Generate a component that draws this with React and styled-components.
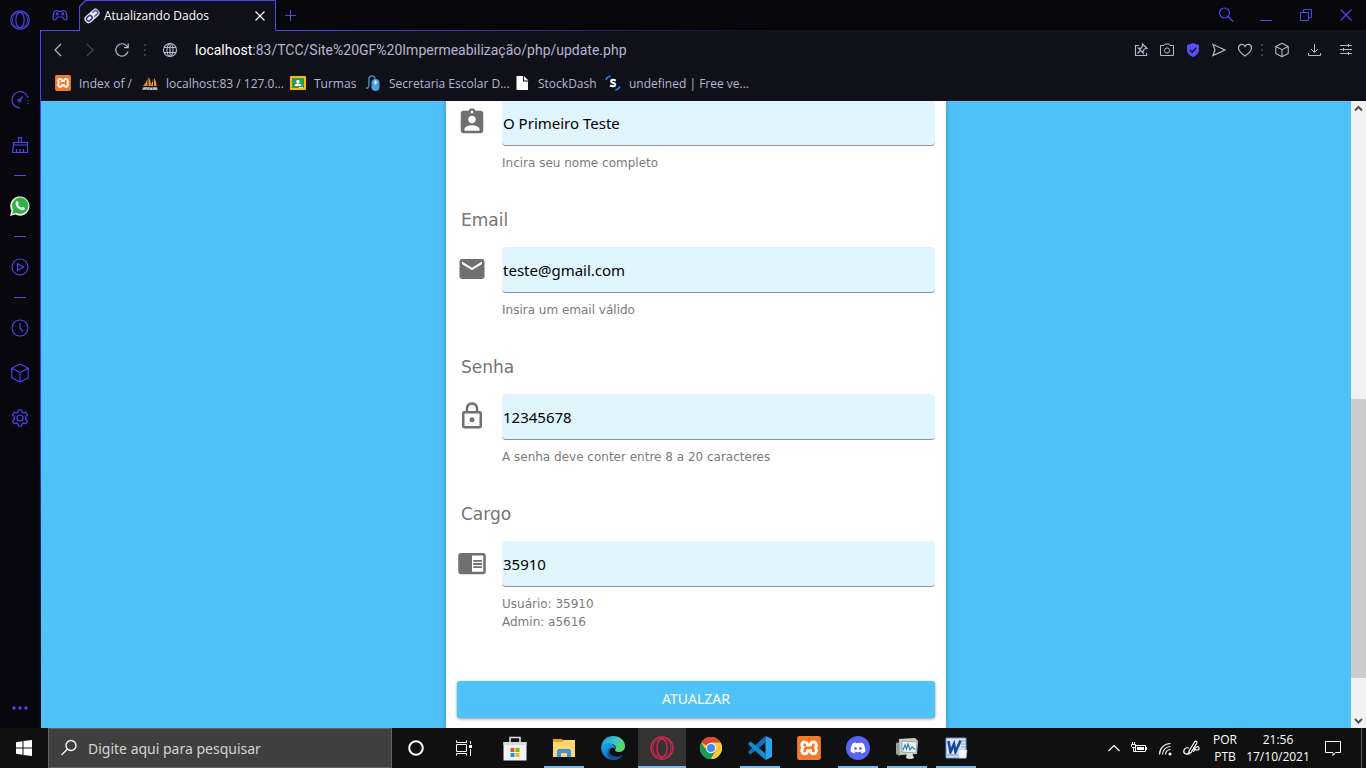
import React from "react";
import styled, { createGlobalStyle, css } from "styled-components";
import { MdAssignmentInd, MdEmail, MdLockOutline, MdChromeReaderMode } from "react-icons/md";
import { FaDiscord } from "react-icons/fa";
import { SiXampp } from "react-icons/si";

const accent = "#4b48ee";
const sky = "#4fc3f9";
const ui = `"Open Sans", "Noto Sans", sans-serif`;
const verdana = `"DejaVu Sans", sans-serif`;

const GlobalStyle = createGlobalStyle`
  *, *::before, *::after { box-sizing: border-box; }
  body { margin: 0; font-family: ${ui}; }
  button { border: 0; padding: 0; background: none; font: inherit; color: inherit; }
  svg { display: block; flex: none; }
`;

const Desktop = styled.div`
  display: flex;
  flex-direction: column;
  height: 100vh;
  overflow: hidden;
`;

const Browser = styled.div`
  display: flex;
  flex: 1;
  min-height: 0;
  background: #101018;
`;

/* ---------- side bar ---------- */
const Sidebar = styled.nav`
  display: flex;
  flex-direction: column;
  width: 41px;
  padding-right: 2px;
  color: ${accent};
  background: linear-gradient(${accent}, #3a3ac0 55%, #07070d 92%) right 30px / 1px 100% no-repeat, #07070d;
`;

const SideButton = styled.button`
  display: flex;
  align-items: center;
  justify-content: center;
  height: ${(p) => (p.$edge ? 40 : 45)}px;
`;

const SideGroup = styled.div`
  display: flex;
  flex-direction: column;
  flex: 1;
  padding-top: 37px;
`;

const SideRule = styled.hr`
  width: 12px;
  height: 1px;
  margin: 8px auto 7px;
  border: 0;
  background: ${accent};
`;

/* ---------- window chrome ---------- */
const Window = styled.div`
  display: flex;
  flex-direction: column;
  flex: 1;
  min-width: 0;
`;

const TabStrip = styled.header`
  display: flex;
  height: 31px;
  color: ${accent};
  background: linear-gradient(to right, ${accent} 20%, #101018 56%) bottom / 100% 1px no-repeat, #07070b;
`;

const CornerButton = styled.button`
  display: flex;
  align-items: center;
  justify-content: center;
  width: 38px;
  height: 30px;
`;

const Tab = styled.div`
  position: relative;
  z-index: 0;
  display: flex;
  align-items: center;
  width: 197px;
  padding: 0 9px 0 5px;
  gap: 4px;
  color: #fff;
  font-size: 12px;
  background: ${accent};
  clip-path: polygon(6px 0, 100% 0, 100% 100%, 0 100%, 0 6px);
  &::before {
    content: "";
    position: absolute;
    z-index: -1;
    inset: 1px 1px 0;
    background: #101018;
    clip-path: polygon(6px 0, 100% 0, 100% 100%, 0 100%, 0 6px);
  }
`;

const TabTitle = styled.span`
  flex: 1;
  white-space: nowrap;
`;

const NewTab = styled(CornerButton)`
  width: 28px;
`;

const WindowControls = styled.div`
  display: flex;
  margin-left: auto;
`;

const WindowButton = styled(CornerButton)`
  width: 40px;
`;

const AddressRow = styled.div`
  display: flex;
  align-items: center;
  height: 38px;
  padding: 0 4px 0 1px;
  color: #b6b4d2;
`;

const ToolButton = styled.button`
  display: flex;
  align-items: center;
  justify-content: center;
  width: ${(p) => p.$w || 32}px;
  height: 32px;
  color: ${(p) => (p.$dim ? "#44445a" : "inherit")};
`;

const DotRule = styled.span`
  width: ${(p) => p.$w}px;
  height: 12px;
  background: repeating-linear-gradient(#3c3c48 0 2px, transparent 2px 5px) center / 2px 12px no-repeat;
`;

const Address = styled.div`
  flex: 1;
  padding-left: 7px;
  font: 14px Roboto, sans-serif;
  white-space: nowrap;
  b { font-weight: 400; color: #fff; }
`;

const Bookmarks = styled.nav`
  display: flex;
  height: 32px;
  padding: 0 14px 4px;
`;

const Bookmark = styled.a`
  display: flex;
  align-items: center;
  gap: 8px;
  width: ${(p) => p.$w}px;
  color: #b9b7d6;
  font-size: 12px;
  text-decoration: none;
  white-space: nowrap;
`;

/* ---------- page ---------- */
const Viewport = styled.div`
  display: flex;
  flex: 1;
  min-height: 0;
`;

const Page = styled.main`
  display: flex;
  flex-direction: column;
  justify-content: flex-end;
  align-items: center;
  flex: 1;
  overflow: hidden;
  background: ${sky};
`;

const Card = styled.form`
  flex: none;
  width: 100%;
  max-width: 500px;
  min-height: 100%;
  padding: 0 11px 10px;
  background: #fff;
  box-shadow: 0 2px 5px rgba(0, 0, 0, 0.3);
`;

const Field = styled.div`
  margin-bottom: ${(p) => (p.$last ? 50 : 35)}px;
`;

const FieldLabel = styled.label`
  display: block;
  padding-left: 4px;
  margin-bottom: 14px;
  color: #757575;
  font: 17px/26px ${verdana};
`;

const FieldRow = styled.div`
  display: flex;
  align-items: center;
  gap: 15px;
  color: #707070;
  svg { margin-bottom: 2px; }
`;

const TextInput = styled.input`
  flex: 1;
  min-width: 0;
  height: 46px;
  padding: 0 1px;
  border: 0;
  border-bottom: 1px solid #8d9498;
  border-radius: 4px;
  outline: 0;
  background: #e1f5fe;
  color: #000;
  font: 15px "Noto Sans", sans-serif;
`;

const Hint = styled.p`
  margin: 8px 0 0 45px;
  color: #7b7b7b;
  font: 12px/18px ${verdana};
`;

const Submit = styled.button`
  display: block;
  width: 100%;
  height: 37px;
  padding-bottom: 2px;
  border-radius: 3px;
  background: ${sky};
  box-shadow: 0 1px 3px rgba(0, 0, 0, 0.45);
  color: #fff;
  font: 14px "Noto Sans", sans-serif;
`;

const Scrollbar = styled.div`
  display: flex;
  flex-direction: column;
  width: 15px;
  background: #f1f1f1;
  color: #505050;
`;

const ScrollArrow = styled.button`
  display: flex;
  align-items: center;
  justify-content: center;
  height: 15px;
`;

const ScrollPart = styled.div`
  flex: ${(p) => p.$share};
  background: ${(p) => (p.$thumb ? "#cdcdcd" : "transparent")};
`;

/* ---------- task bar ---------- */
const Taskbar = styled.footer`
  display: flex;
  flex: none;
  height: 40px;
  background: #101010;
  color: #fff;
`;

const TaskButton = styled.button`
  display: flex;
  align-items: center;
  justify-content: center;
  width: 48px;
  height: 40px;
  ${(p) => p.$running && css`
    background: linear-gradient(#76b9ed, #76b9ed) bottom / ${p.$active ? 48 : 40}px 2px no-repeat
      ${p.$active ? ", #333" : ""};
  `}
`;

const SearchBox = styled.label`
  display: flex;
  align-items: center;
  gap: 10px;
  width: 344px;
  padding-left: 11px;
  border: 1px solid #636363;
  background: #3f3f3f;
  input {
    flex: 1;
    min-width: 0;
    padding: 0;
    border: 0;
    outline: 0;
    background: none;
    font: 14px "Noto Sans", sans-serif;
  }
  input::placeholder { color: #d4d4d4; opacity: 1; }
`;

const Apps = styled.div`
  display: flex;
  gap: 1px;
  margin-left: 3px;
`;

const Tray = styled.div`
  display: flex;
  margin-left: auto;
`;

const TrayButton = styled.button`
  display: flex;
  flex-direction: column;
  align-items: center;
  justify-content: center;
  width: ${(p) => p.$w || 26}px;
  font-size: 12px;
  line-height: 17px;
  padding-bottom: 1px;
  white-space: nowrap;
`;

const ShowDesktop = styled.button`
  width: 5px;
  margin-left: 5px;
  border-left: 1px solid #5a5a5a;
`;

/* ---------- drawings ---------- */
const Line = ({ s = 24, w = 1, children }) => (
  <svg width={s} height={s} viewBox={`0 0 ${s} ${s}`} fill="none" stroke="currentColor" strokeWidth={w} aria-hidden="true">
    {children}
  </svg>
);

const OperaIcon = ({ s = 24, w = 1.4 }) => (
  <svg width={s} height={s} viewBox="0 0 24 24" fill="none" stroke="currentColor" strokeWidth={w} aria-hidden="true">
    <circle cx="12" cy="12" r="11" />
    <circle cx="12" cy="12" r="9.2" strokeWidth=".9" />
    <ellipse cx="12" cy="12" rx="5" ry="9.2" />
  </svg>
);

const CubeIcon = ({ s = 24 }) => (
  <svg width={s} height={s} viewBox="0 0 24 24" fill="none" stroke="currentColor" strokeWidth={26 / s} strokeLinejoin="round" aria-hidden="true">
    <path d="M12 3l8.3 4.2v9.6L12 21l-8.3-4.2V7.200zM3.700 7.200L12 11.500l8.300-4.300M12 11.500V21" />
  </svg>
);

const Xampp = ({ s }) => (
  <svg width={s} height={s} viewBox="0 0 24 24" aria-hidden="true">
    <rect x="2" y="2" width="20" height="20" fill="#fff" />
    <SiXampp x="0" y="0" size={24} color="#f47a2a" />
  </svg>
);

const sideIcons = {
  gauge: <Line w={1.2}><path d="M12 20A8.200 8.200 0 1 1 20 9.500M11 12.500l4-4M20 12v1M20 15v1" /><circle cx="11.500" cy="12.500" r="1.500" /></Line>,
  broom: <Line w={1.2}><path d="M10.500 9.500v-5h3v5M5.500 9.500h14v2.500h-14zM5.500 12L4.500 19.500h15V12M8.500 19.500V16M12 19.500V16M15.500 19.500V16" /></Line>,
  play: <Line w={1.2}><circle cx="12" cy="12" r="8" /><path d="M9.500 8.800v6.400l6-3.200z" /></Line>,
  clock: <Line w={1.2}><circle cx="12" cy="12" r="8" /><path d="M12 7v5l3 3.500" /></Line>,
  gear: (
    <Line w={1.2}>
      <circle cx="12" cy="12" r="3" />
      <path d="M10.400 4h3.200l.5 2.300 1.500.8 2.300-.8 1.600 2.700-1.800 1.600v2.800l1.800 1.600-1.600 2.700-2.300-.8-1.500.8-.5 2.300h-3.200l-.5-2.300-1.500-.8-2.300.8L4.500 15l1.800-1.600v-2.800L4.500 9l1.600-2.700 2.300.8 1.500-.8z" />
    </Line>
  ),
};

const WhatsApp = () => (
  <svg width="22" height="22" viewBox="0 0 22 22" aria-hidden="true">
    <path d="M1 21l1.500-5.200A9.600 9.600 0 1 1 6.300 19.500z" fill="#f2f2f2" />
    <circle cx="11.200" cy="10.700" r="8.200" fill="#2fb146" />
    <path d="M3.200 18.900l1.200-4.200 3 3z" fill="#2fb146" />
    <path d="M7.300 6.600c.7-1 1.500-.7 1.800.1l.6 1.500c.1.600-.8 1.100-.6 1.500.7 1.300 1.600 2.200 3 2.900.6.200 1-.9 1.500-.8l1.800.9c.8.400.2 1.600-.3 2-1.300.9-2.900.4-4.400-.3a9.500 9.500 0 0 1-3.800-4.400c-.4-1.200-.3-2.500.4-3.400z" fill="#fff" />
  </svg>
);

const Favicon = () => (
  <svg width="16" height="16" viewBox="0 0 16 16" aria-hidden="true">
    <g transform="rotate(-42 8 8)">
      <rect x="-.5" y="4" width="17" height="8" rx="3.500" fill="#e8e8f2" />
      <rect x="1.500" y="5.800" width="6" height="4.200" rx="2" fill="none" stroke="#353b86" strokeWidth="1.500" />
      <path d="M9 10h4a2 2 0 0 0 0-4.200h-2.500" fill="none" stroke="#5b638f" strokeWidth="1.500" />
    </g>
  </svg>
);

const bookmarkIcons = {
  sails: (
    <svg width="16" height="16" viewBox="0 0 16 16" aria-hidden="true">
      <path d="M5.500 1Q6 6 1 11h4.500zM6.500 2q3 4 2 9h-2zM11 0q.5 6-2.500 11H11zM12 3q3 4 2.500 8H12z" fill="#f0962c" />
      <path d="M0 15l1-3h14l1 3z" fill="#77778a" />
      <path d="M2 15v-2h2v1M6 12v3M8 15l1-2 1 2M12 15v-2h2v2" stroke="#dcdce8" fill="none" />
    </svg>
  ),
  classroom: (
    <svg width="16" height="16" viewBox="0 0 16 16" aria-hidden="true">
      <rect y="1" width="16" height="14" rx="1" fill="#f7bb12" />
      <rect x="2" y="3" width="12" height="10" fill="#2c9b58" />
      <circle cx="8" cy="6.500" r="1.700" fill="#fff" />
      <path d="M4.500 11q0-2.500 3.500-2.500t3.500 2.500z" fill="#fff" />
      <path d="M9 12h4v1H9z" fill="#e6e6e6" />
    </svg>
  ),
  mouse: (
    <svg width="16" height="16" viewBox="0 0 16 16" aria-hidden="true">
      <path d="M1 13q3 1 3-4V4Q4 1 7 1q3 0 3 3" fill="none" stroke="#3a86bd" strokeWidth="1.500" />
      <rect x="6.500" y="4" width="8" height="12" rx="4" fill="#4da3dc" />
      <rect x="9.500" y="5.500" width="2" height="4" rx="1" fill="#fff" />
    </svg>
  ),
  file: (
    <svg width="16" height="16" viewBox="0 0 16 16" aria-hidden="true">
      <path d="M2.500 1H9v5.500h5V15h-11.500zM10 1l4.500 4.500H10z" fill="#fff" />
    </svg>
  ),
  swirl: (
    <svg width="16" height="16" viewBox="0 0 17 17" aria-hidden="true">
      <path d="M1 5q1-3 5-4M16 12q-1 3-5 4" fill="none" stroke="#1f7cf0" strokeWidth="1.700" />
      <path d="M11.500 6Q8.500 4.400 6.700 5.700 6 7.800 8.700 8.400q2.700.6 2 2.700Q9 12.700 5.300 11.200" fill="none" stroke="#fff" strokeWidth="2.200" />
    </svg>
  ),
};

const bookmarks = [
  { icon: <Xampp s={16} />, text: "Index of /", w: 87 },
  { icon: bookmarkIcons.sails, text: "localhost:83 / 127.0...", w: 148 },
  { icon: bookmarkIcons.classroom, text: "Turmas", w: 75 },
  { icon: bookmarkIcons.mouse, text: "Secretaria Escolar D...", w: 149 },
  { icon: bookmarkIcons.file, text: "StockDash", w: 91 },
  { icon: bookmarkIcons.swirl, text: "undefined | Free ve...", w: 150 },
];

const fields = [
  { id: "nome", Icon: MdAssignmentInd, value: "O Primeiro Teste", hint: ["Incira seu nome completo"] },
  { id: "email", label: "Email", Icon: MdEmail, value: "teste@gmail.com", hint: ["Insira um email válido"] },
  { id: "senha", label: "Senha", Icon: MdLockOutline, value: "12345678", hint: ["A senha deve conter entre 8 a 20 caracteres"] },
  { id: "cargo", label: "Cargo", Icon: MdChromeReaderMode, value: "35910", hint: ["Usuário: 35910", "Admin: a5616"], last: true },
];

const Store = () => (
  <svg width="24" height="26" viewBox="0 0 24 26" aria-hidden="true">
    <path d="M7 8V2.500h10V8" fill="none" stroke="#dedede" strokeWidth="1.600" />
    <path d="M.5 7h23v18.500H.5z" fill="#f2f2f2" />
    <path d="M.5 7h23v3H.5z" fill="#d9d9d9" />
    <path d="M7.500 13h4v4h-4z" fill="#f25022" /><path d="M12.500 13h4v4h-4z" fill="#7fba00" />
    <path d="M7.500 18h4v4h-4z" fill="#00a4ef" /><path d="M12.500 18h4v4h-4z" fill="#ffb900" />
  </svg>
);

const Explorer = () => (
  <svg width="22" height="20" viewBox="0 0 22 20" aria-hidden="true">
    <path d="M0 1h9l2 2h11v16H0z" fill="#e8a317" />
    <path d="M0 4h9l2-2h11v17H0z" fill="#ffd76a" />
    <path d="M4 19v-6q0-2 2-2h10q2 0 2 2v6h-4v-4H8v4z" fill="#3b93d8" />
  </svg>
);

const Edge = () => (
  <svg width="24" height="24" viewBox="0 0 24 24" aria-hidden="true">
    <defs>
      <linearGradient id="edgeTop" x1="0" x2="1" y1=".2" y2=".6">
        <stop offset="0" stopColor="#1f9be0" /><stop offset=".5" stopColor="#35c4d0" /><stop offset="1" stopColor="#62dc55" />
      </linearGradient>
      <linearGradient id="edgeSide" x1="0" x2=".6" y1="0" y2="1">
        <stop offset="0" stopColor="#1db1e8" /><stop offset="1" stopColor="#0a62c0" />
      </linearGradient>
    </defs>
    <path d="M.2 10.500C1.200 4 6 0 12 0c7 0 12 4.500 12 10 0 4-3 6-6.300 6-2.500 0-4.200-1-3.500-2.200 2-3-1-6-5-6C4 7.800.8 9.500.2 12z" fill="url(#edgeTop)" />
    <path d="M.2 11C2 7.500 6 6.500 9.500 7.500c3 .8 5 3 4.700 5.500-2.500-3-6.700-.5-5.700 4 .7 3.500 4 6 7.500 6.300A12 12 0 0 1 .2 11z" fill="url(#edgeSide)" />
    <path d="M9.500 11.500c-3 3-.5 8.500 4.500 9 3.500.4 6.500-.8 8.300-2.300C20 22.500 16 24.500 11.500 24 6 22 4.500 14.500 9.500 11.500z" fill="#124f96" />
  </svg>
);

const Chrome = () => (
  <svg width="22" height="22" viewBox="0 0 24 24" aria-hidden="true">
    <circle cx="12" cy="12" r="12" fill="#fcc934" />
    <path d="M12 12L1.600 6A12 12 0 0 1 22.400 6z" fill="#dc4437" />
    <path d="M1.600 6A12 12 0 0 0 12 24l5.200-9L12 12H5z" fill="#159a58" />
    <path d="M12 6h10.400A12 12 0 0 1 12 24l5.200-9z" fill="#fcc934" />
    <circle cx="12" cy="12" r="5.600" fill="#f6f6f6" /><circle cx="12" cy="12" r="4.400" fill="#4688f1" />
  </svg>
);

const Code = () => (
  <svg width="24" height="24" viewBox="0 0 24 24" aria-hidden="true">
    <path d="M17.500 6.500L2.500 18.500.3 16.500v-1L17.500 0z" fill="#0b72bd" />
    <path d="M17.500 17.500L2.500 5.500.3 7.500v1L17.500 24z" fill="#168bd2" />
    <path d="M17.500 0L24 3v18l-6.500 3z" fill="#24a5ee" />
  </svg>
);

const DiscordIcon = () => (
  <svg width="24" height="24" viewBox="0 0 24 24" aria-hidden="true">
    <circle cx="12" cy="12" r="12" fill="#5865f2" />
    <FaDiscord x="4" y="4" size={16} color="#fff" />
  </svg>
);

const Monitor = () => (
  <svg width="24" height="24" viewBox="0 0 24 24" aria-hidden="true">
    <path d="M1 7l4-1v14l-4-2z" fill="#9ba29b" /><path d="M4 3l16-1 3 3-1 13-17 1z" fill="#c9cdca" />
    <path d="M7 5l15 1-1 11-14-1z" fill="#eef2f3" stroke="#8d9492" strokeWidth=".8" />
    <path d="M8 14l2-5 1.500 4L13 8l2 6 2-3 3 2.500" fill="none" stroke="#2b86bb" strokeWidth="1.200" />
    <path d="M12 17h5l2 5q-4 2-8 0z" fill="#d8dad8" />
  </svg>
);

const Word = () => (
  <svg width="23" height="22" viewBox="0 0 23 22" aria-hidden="true">
    <path d="M1 1h20v20H1z" fill="#dfe9f7" stroke="#6d8fc6" />
    <path d="M16 4h4M16 7h4M16 10h4" stroke="#7b9cd0" />
    <path d="M3.500 4l2 11L9 7l1.500 8L15.500 3.500" fill="none" stroke="#174a99" strokeWidth="2.600" />
    <path d="M2 18h11" stroke="#9db6df" strokeWidth="2" /><path d="M13 12l9 1-1 8h-7z" fill="#f7faff" stroke="#9db6df" strokeWidth=".7" />
  </svg>
);

const apps = [
  { name: "Microsoft Store", icon: <Store /> },
  { name: "Explorador de Arquivos", icon: <Explorer />, running: true },
  { name: "Edge", icon: <Edge /> },
  { name: "Opera GX", icon: <span style={{ color: "#dc2450" }}><OperaIcon /></span>, running: true, active: true },
  { name: "Chrome", icon: <Chrome /> },
  { name: "VS Code", icon: <Code />, running: true },
  { name: "XAMPP", icon: <Xampp s={24} /> },
  { name: "Discord", icon: <DiscordIcon />, running: true },
  { name: "Monitor", icon: <Monitor />, running: true },
  { name: "Word", icon: <Word />, running: true },
];

export default function App() {
  return (
    <Desktop>
      <GlobalStyle />
      <Browser>
        <Sidebar aria-label="Barra lateral">
          <SideButton $edge aria-label="Menu"><OperaIcon s={20} /></SideButton>
          <SideGroup>
            <SideButton aria-label="GX Control">{sideIcons.gauge}</SideButton>
            <SideButton aria-label="GX Cleaner">{sideIcons.broom}</SideButton>
            <SideRule />
            <SideButton aria-label="WhatsApp"><WhatsApp /></SideButton>
            <SideRule />
            <SideButton aria-label="Player">{sideIcons.play}</SideButton>
            <SideRule />
            <SideButton aria-label="Histórico">{sideIcons.clock}</SideButton>
            <SideButton aria-label="Extensões"><CubeIcon /></SideButton>
            <SideButton aria-label="Configurações">{sideIcons.gear}</SideButton>
          </SideGroup>
          <SideButton $edge aria-label="Mais">
            <svg width="18" height="4" viewBox="0 0 18 4" fill="currentColor"><circle cx="3" cy="2" r="1.700" /><circle cx="9" cy="2" r="1.700" /><circle cx="15" cy="2" r="1.700" /></svg>
          </SideButton>
        </Sidebar>

        <Window>
          <TabStrip>
            <CornerButton aria-label="GX Corner">
              <Line s={16} w={1.2}><path d="M3.500 3.500h2l1 1h3l1-1h2q2 1 2.500 7 0 2.500-2 2.500-1 0-2.500-3h-5q-1.500 3-2.500 3-2 0-2-2.500.500-6 2.500-7z" /><circle cx="5.200" cy="6.800" r="1" /><circle cx="10.800" cy="6.800" r="1" /></Line>
            </CornerButton>
            <Tab>
              <Favicon />
              <TabTitle>Atualizando Dados</TabTitle>
              <button aria-label="Fechar guia"><Line s={14} w={1.2}><path d="M2.500 2.500l9 9M11.500 2.500l-9 9" /></Line></button>
            </Tab>
            <NewTab aria-label="Nova guia"><Line s={12}><path d="M6.500 1v11M1 6.500h11" /></Line></NewTab>
            <WindowControls>
              <WindowButton aria-label="Pesquisar"><Line s={18} w={1.2}><circle cx="7.500" cy="7" r="5" /><path d="M11 10.500l5 5" /></Line></WindowButton>
              <WindowButton aria-label="Minimizar"><Line s={14}><path d="M1 12.500h12" /></Line></WindowButton>
              <WindowButton aria-label="Restaurar"><Line s={14}><path d="M1.500 4.500h8v8h-8zM4.500 4.500v-3h8v8h-3" /></Line></WindowButton>
              <WindowButton aria-label="Fechar"><Line s={14} w={1.2}><path d="M1.500 1.500l11 11M12.500 1.500l-11 11" /></Line></WindowButton>
            </WindowControls>
          </TabStrip>

          <AddressRow>
            <ToolButton aria-label="Voltar"><Line s={16} w={1.2}><path d="M11 2L5 8l6 6" /></Line></ToolButton>
            <ToolButton $dim aria-label="Avançar"><Line s={16} w={1.2}><path d="M5 2l6 6-6 6" /></Line></ToolButton>
            <ToolButton aria-label="Recarregar"><Line s={16} w={1.2}><path d="M14 9.500A6.200 6.200 0 1 1 12.500 3.700L14 5.500M14.200 1.500v4.200H10" /></Line></ToolButton>
            <DotRule $w={14} />
            <ToolButton $w={36} aria-label="Informações do site">
              <Line s={16} w={1.1}><circle cx="8" cy="8" r="6.500" /><ellipse cx="8" cy="8" rx="3" ry="6.500" /><path d="M2 5.500h12M2 10.500h12M8 1.500v13" /></Line>
            </ToolButton>
            <Address><b>localhost</b>:83/TCC/Site%20GF%20Impermeabilização/php/update.php</Address>
            <ToolButton $w={26} aria-label="Fixar"><Line s={16} w={1.2}><path d="M6 3.500H2.500v10h11V11M9.500 2l4.500 4.500-2.500.5-1.500 2 .2 2.200L5.500 6.200l2.500.2 1.200-1.800zM7.500 8.500L4.500 11.500" /></Line></ToolButton>
            <ToolButton $w={26} aria-label="Captura"><Line s={16}><path d="M1.500 3.500h3.500l1-1.500h4l1 1.500h3.500v10h-13z" /><circle cx="8" cy="8.500" r="2.600" /></Line></ToolButton>
            <ToolButton $w={26} aria-label="Bloqueador">
              <svg width="16" height="16" viewBox="0 0 16 16"><path d="M8 1l6 2v5q0 4.500-6 7-6-2.500-6-7V3z" fill="#5450f8" /><path d="M5 8l2.200 2.200L11.200 6" fill="none" stroke="#101018" strokeWidth="1.600" /></svg>
            </ToolButton>
            <ToolButton $w={26} aria-label="My Flow"><Line s={16} w={1.2}><path d="M2 2.500L14 8 2 13.500 4 8z" /></Line></ToolButton>
            <ToolButton $w={26} aria-label="Favoritar"><Line s={16} w={1.2}><path d="M8 14Q1.500 9.500 1.500 6c0-4 5-5 6.500-1.500C9.500 1 14.500 2 14.500 6q0 3.500-6.500 8z" /></Line></ToolButton>
            <DotRule $w={8} />
            <ToolButton aria-label="Extensões"><CubeIcon s={18} /></ToolButton>
            <ToolButton aria-label="Downloads"><Line s={16}><path d="M8.500 2v8M5 7l3.500 3.500L12 7M2.500 11v2.500h12V11" /></Line></ToolButton>
            <ToolButton aria-label="Configuração fácil"><Line s={16}><path d="M2 3.500h12M2 7.500h12M2 11.500h12M10.500 2v3M5.500 6v3M10.500 10v3" /></Line></ToolButton>
          </AddressRow>

          <Bookmarks aria-label="Favoritos">
            {bookmarks.map((b) => (
              <Bookmark href="#" key={b.text} $w={b.w}>{b.icon}<span>{b.text}</span></Bookmark>
            ))}
          </Bookmarks>

          <Viewport>
            <Page>
              <Card onSubmit={(e) => e.preventDefault()}>
                {fields.map(({ id, label, Icon, value, hint, last }) => (
                  <Field key={id} $last={last}>
                    {label && <FieldLabel htmlFor={id}>{label}</FieldLabel>}
                    <FieldRow>
                      <Icon size={30} aria-hidden="true" />
                      <TextInput id={id} type="text" defaultValue={value} aria-label={label ? undefined : "Nome"} />
                    </FieldRow>
                    <Hint>{hint.map((line, i) => <React.Fragment key={line}>{i > 0 && <br />}{line}</React.Fragment>)}</Hint>
                  </Field>
                ))}
                <Submit type="submit">ATUALZAR</Submit>
              </Card>
            </Page>
            <Scrollbar>
              <ScrollArrow aria-label="Rolar para cima"><Line s={11} w={2}><path d="M2 7.500L5.500 4 9 7.500" /></Line></ScrollArrow>
              <ScrollPart $share={283} />
              <ScrollPart $share={279} $thumb />
              <ScrollPart $share={35} />
              <ScrollArrow aria-label="Rolar para baixo"><Line s={11} w={2}><path d="M2 4l3.500 3.500L9 4" /></Line></ScrollArrow>
            </Scrollbar>
          </Viewport>
        </Window>
      </Browser>

      <Taskbar>
        <TaskButton aria-label="Iniciar">
          <svg width="16" height="16" viewBox="0 0 16 16" fill="#fff"><path d="M0 2.200L6.500 1.300v6.200H0zM7.500 1.100L16 0v7.500H7.500zM0 8.500h6.500v6.200L0 13.800zM7.500 8.500H16V16l-8.500-1.100z" /></svg>
        </TaskButton>
        <SearchBox>
          <Line s={18} w={1.3}><circle cx="11" cy="6.500" r="5" /><path d="M7.500 10L1.500 16" /></Line>
          <input type="text" placeholder="Digite aqui para pesquisar" aria-label="Pesquisar" />
        </SearchBox>
        <TaskButton aria-label="Cortana"><Line s={18} w={2}><circle cx="9" cy="9" r="6.800" /></Line></TaskButton>
        <TaskButton aria-label="Visão de tarefas">
          <Line s={18}><path d="M1.500 1.500v2h10v-2M1.500 5.500h10v7h-10zM1.500 16.500v-2h10v2M15.500 2v3M15.500 10v7" /><path d="M14 6h3v3h-3z" fill="currentColor" stroke="none" /></Line>
        </TaskButton>
        <Apps>
          {apps.map((a) => (
            <TaskButton key={a.name} aria-label={a.name} $running={a.running} $active={a.active}>{a.icon}</TaskButton>
          ))}
        </Apps>
        <Tray>
          <TrayButton $w={24} aria-label="Ícones ocultos"><Line s={14} w={1.2}><path d="M1.500 10L7 4.500l5.500 5.500" /></Line></TrayButton>
          <TrayButton aria-label="Bateria">
            <Line s={18}><path d="M5.500 6.500h10v6h-10zM16.500 8v3M2.500 3v2M4.500 3v2M1.500 5.500h4v2l-1 1h-2l-1-1zM3.500 9v3.500h2" /><path d="M7 8h7v3H7z" fill="currentColor" stroke="none" /></Line>
          </TrayButton>
          <TrayButton aria-label="Rede">
            <Line s={18} w={1.1}><path d="M3.500 15.500A11 11 0 0 1 14.500 4.500M6.500 15.500A8 8 0 0 1 14.500 7.500M9.500 15.500a5 5 0 0 1 5-5" /><circle cx="14" cy="15" r="1.500" fill="currentColor" stroke="none" /></Line>
          </TrayButton>
          <TrayButton aria-label="Windows Ink">
            <Line s={18} w={1.2}><path d="M7 12L12.500 3q1-1.500 2-.5t0 2.200L9 13.500l-2.500 1.500zM7 9q-4-1-5 2t1.500 4q3 .5 4-2.500M11.500 8q1 3 3.500 3t2-2-2.500-1-3 5" /></Line>
          </TrayButton>
          <TrayButton $w={42}><span>POR</span><span>PTB</span></TrayButton>
          <TrayButton $w={64}><span>21:56</span><span>17/10/2021</span></TrayButton>
          <TrayButton $w={46} aria-label="Notificações"><Line s={18}><path d="M1.500 2.500h15v11h-5l-2.500 3v-3H1.500z" /></Line></TrayButton>
          <ShowDesktop aria-label="Mostrar área de trabalho" />
        </Tray>
      </Taskbar>
    </Desktop>
  );
}
